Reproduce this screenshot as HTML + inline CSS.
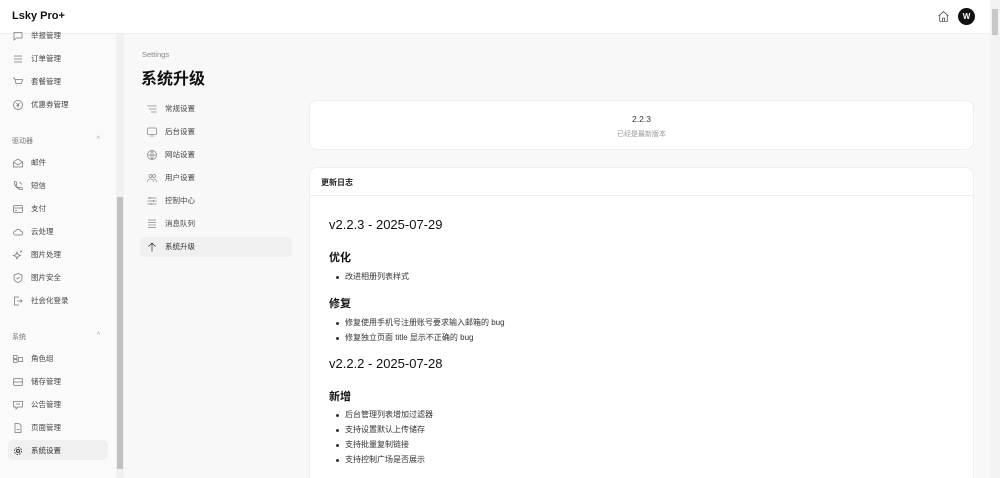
<!DOCTYPE html>
<html><head><meta charset="utf-8"><style>
*{margin:0;padding:0;box-sizing:border-box}
html,body{width:1000px;height:478px;overflow:hidden}
body{background:#f8f8f8;font-family:"Liberation Sans","Noto Sans CJK SC",sans-serif;color:#222;position:relative}
.hdr{position:absolute;left:0;top:0;width:990px;height:34px;background:#fff;border-bottom:1px solid #eee}
.logo{position:absolute;left:12px;top:10px;font-size:11px;font-weight:bold;color:#111}
.avatar{position:absolute;left:958px;top:8px;width:17px;height:17px;border-radius:50%;background:#111;color:#fff;font-size:8px;font-weight:bold;text-align:center;line-height:17px}
.home{position:absolute;left:937px;top:10px}
.pscroll{position:absolute;left:990px;top:0;width:10px;height:478px;background:#f3f3f3}
.pscroll i{position:absolute;left:2px;top:9px;width:6px;height:26px;background:#c8c8c8}
.side{position:absolute;left:0;top:34px;width:116px;height:444px;background:#fafafa}
.sbar{position:absolute;left:116px;top:34px;width:8px;height:444px;background:#f1f1f1}
.sbar i{position:absolute;left:1px;top:163px;width:6px;height:272px;background:#c1c1c1}
.si{position:absolute;left:12px;font-size:7.5px;color:#444;height:20px;line-height:20px;width:96px}
.si svg{position:absolute;left:0;top:4px}
.si span{position:absolute;left:19px}
.sh{position:absolute;left:12px;font-size:7px;color:#777;width:92px}
.sh b{position:absolute;right:4px;font-weight:normal;color:#999}
.sub{position:absolute;left:140px;width:152px;height:20px;font-size:7.5px;color:#444;line-height:20px;border-radius:4px}
.sub svg{position:absolute;left:6px;top:4px}
.sub span{position:absolute;left:25px}
.card{position:absolute;left:309px;width:665px;background:#fff;border:1px solid #eee;border-radius:8px}
.m{position:absolute;left:329px;color:#111}
li{position:absolute;left:345px;font-size:8px;color:#333;list-style:none}
li:before{content:"";position:absolute;left:-9px;top:5px;width:3px;height:3px;border-radius:50%;background:#333}
</style></head><body>
<div class="hdr"><div class="logo">Lsky Pro+</div>
<svg class="home" width="13" height="13" viewBox="0 0 24 24" fill="none" stroke="#555" stroke-width="1.6"><path d="M3 11l9-8 9 8M5 9v12h14V9M10 21v-6h4v6"/></svg>
<div class="avatar">W</div></div>
<div class="pscroll"><i></i></div>
<div class="side"></div>
<div class="sbar"><i></i></div>
<div style="position:absolute;left:8px;top:440px;width:100px;height:20px;background:#f0f0f0;border-radius:5px"></div>
<div class="si" style="top:26px"><svg width="12" height="12" viewBox="0 0 24 24" fill="none" stroke="#777" stroke-width="1.5"><path d="M4 5h16v11H9l-5 4z"/></svg><span>举报管理</span></div>
<div class="si" style="top:49px"><svg width="12" height="12" viewBox="0 0 24 24" fill="none" stroke="#777" stroke-width="1.5"><path d="M4 6h16M4 12h16M4 18h16"/></svg><span>订单管理</span></div>
<div class="si" style="top:72px"><svg width="12" height="12" viewBox="0 0 24 24" fill="none" stroke="#777" stroke-width="1.5"><path d="M2 4h3l3 11h11l2-8H6M9 20h1M17 20h1"/></svg><span>套餐管理</span></div>
<div class="si" style="top:95px"><svg width="12" height="12" viewBox="0 0 24 24" fill="none" stroke="#777" stroke-width="1.5"><circle cx="12" cy="12" r="9"/><path d="M9 8l3 4 3-4M12 12v5M9 13h6"/></svg><span>优惠券管理</span></div>
<div class="sh" style="top:136px">驱动器<b>^</b></div>
<div class="si" style="top:153px"><svg width="12" height="12" viewBox="0 0 24 24" fill="none" stroke="#777" stroke-width="1.5"><path d="M3 10l9-6 9 6v10H3zM3 10l9 6 9-6"/></svg><span>邮件</span></div>
<div class="si" style="top:176px"><svg width="12" height="12" viewBox="0 0 24 24" fill="none" stroke="#777" stroke-width="1.5"><path d="M5 3l4 1 1 4-2 2a12 12 0 006 6l2-2 4 1 1 4c-9 1-17-7-16-16zM15 4l5 5"/></svg><span>短信</span></div>
<div class="si" style="top:199px"><svg width="12" height="12" viewBox="0 0 24 24" fill="none" stroke="#777" stroke-width="1.5"><rect x="3" y="5" width="18" height="14" rx="2"/><path d="M3 10h18M6 15h4"/></svg><span>支付</span></div>
<div class="si" style="top:222px"><svg width="12" height="12" viewBox="0 0 24 24" fill="none" stroke="#777" stroke-width="1.5"><path d="M7 18a4 4 0 010-8 6 6 0 0111 1 3.5 3.5 0 010 7z"/></svg><span>云处理</span></div>
<div class="si" style="top:245px"><svg width="12" height="12" viewBox="0 0 24 24" fill="none" stroke="#777" stroke-width="1.5"><path d="M10 6l2 5 5 2-5 2-2 5-2-5-5-2 5-2zM18 3v4M16 5h4"/></svg><span>图片处理</span></div>
<div class="si" style="top:268px"><svg width="12" height="12" viewBox="0 0 24 24" fill="none" stroke="#777" stroke-width="1.5"><path d="M12 3l8 3v6c0 5-4 8-8 9-4-1-8-4-8-9V6zM9 12l2 2 4-4"/></svg><span>图片安全</span></div>
<div class="si" style="top:291px"><svg width="12" height="12" viewBox="0 0 24 24" fill="none" stroke="#777" stroke-width="1.5"><path d="M14 4H5v16h9M10 12h10M17 9l3 3-3 3"/></svg><span>社会化登录</span></div>
<div class="sh" style="top:332px">系统<b>^</b></div>
<div class="si" style="top:349px"><svg width="12" height="12" viewBox="0 0 24 24" fill="none" stroke="#777" stroke-width="1.5"><rect x="3" y="5" width="7" height="6"/><rect x="3" y="13" width="7" height="6"/><rect x="13" y="9" width="8" height="8"/></svg><span>角色组</span></div>
<div class="si" style="top:372px"><svg width="12" height="12" viewBox="0 0 24 24" fill="none" stroke="#777" stroke-width="1.5"><rect x="3" y="5" width="18" height="14" rx="3"/><path d="M3 12h18"/></svg><span>储存管理</span></div>
<div class="si" style="top:395px"><svg width="12" height="12" viewBox="0 0 24 24" fill="none" stroke="#777" stroke-width="1.5"><path d="M3 5h18v11h-9l-4 4v-4H3zM8 10h8"/></svg><span>公告管理</span></div>
<div class="si" style="top:418px"><svg width="12" height="12" viewBox="0 0 24 24" fill="none" stroke="#777" stroke-width="1.5"><path d="M6 3h8l4 4v14H6zM9 15h6"/></svg><span>页面管理</span></div>
<div class="si" style="top:441px;color:#333"><svg width="12" height="12" viewBox="0 0 24 24" fill="none" stroke="#333" stroke-width="2"><circle cx="12" cy="12" r="3"/><circle cx="12" cy="12" r="7" stroke-dasharray="3 2.5"/></svg><span>系统设置</span></div>

<div style="position:absolute;left:142px;top:50px;font-size:7.5px;color:#888">Settings</div>
<div style="position:absolute;left:141px;top:65px;font-size:16px;font-weight:bold;color:#111">系统升级</div>
<div class="sub" style="top:99px"><svg width="12" height="12" viewBox="0 0 24 24" fill="none" stroke="#888" stroke-width="1.5"><path d="M3 6h18M6 12h15M10 18h11"/></svg><span>常规设置</span></div>
<div class="sub" style="top:122px"><svg width="12" height="12" viewBox="0 0 24 24" fill="none" stroke="#888" stroke-width="1.5"><rect x="3" y="4" width="18" height="13" rx="2"/><path d="M8 20h8"/></svg><span>后台设置</span></div>
<div class="sub" style="top:145px"><svg width="12" height="12" viewBox="0 0 24 24" fill="none" stroke="#888" stroke-width="1.5"><circle cx="12" cy="12" r="9"/><path d="M3 12h18M12 3c3 3 3 15 0 18M12 3c-3 3-3 15 0 18"/></svg><span>网站设置</span></div>
<div class="sub" style="top:168px"><svg width="12" height="12" viewBox="0 0 24 24" fill="none" stroke="#888" stroke-width="1.5"><circle cx="9" cy="8" r="3"/><circle cx="16" cy="8" r="3"/><path d="M3 20c0-4 3-6 6-6s6 2 6 6M15 14c3 0 6 2 6 6"/></svg><span>用户设置</span></div>
<div class="sub" style="top:191px"><svg width="12" height="12" viewBox="0 0 24 24" fill="none" stroke="#888" stroke-width="1.5"><path d="M3 6h18M3 12h18M3 18h18M8 4v4M15 10v4M10 16v4"/></svg><span>控制中心</span></div>
<div class="sub" style="top:214px"><svg width="12" height="12" viewBox="0 0 24 24" fill="none" stroke="#888" stroke-width="1.5"><path d="M4 4h16M4 9h16M4 14h16M4 19h16"/></svg><span>消息队列</span></div>
<div class="sub" style="top:237px;background:#f0f0f0;color:#333"><svg width="12" height="12" viewBox="0 0 24 24" fill="none" stroke="#333" stroke-width="1.5"><path d="M12 21V4M5 11l7-7 7 7"/></svg><span>系统升级</span></div>

<div class="card" style="top:100px;height:50px">
<div style="position:absolute;left:0;width:100%;top:13px;text-align:center;font-size:8.5px;color:#333">2.2.3</div>
<div style="position:absolute;left:0;width:100%;top:28px;text-align:center;font-size:7px;color:#999">已经是最新版本</div></div>
<div class="card" style="top:167px;height:320px"><div style="height:28px;border-bottom:1px solid #eee;padding:9px 11px;font-size:8px;font-weight:bold;color:#222">更新日志</div></div>
<div class="m" style="top:217px;font-size:13px">v2.2.3 - 2025-07-29</div>
<div class="m" style="top:249px;font-size:11px;font-weight:bold">优化</div>
<ul><li style="top:271px">改进相册列表样式</li></ul>
<div class="m" style="top:295px;font-size:11px;font-weight:bold">修复</div>
<ul><li style="top:317px">修复使用手机号注册账号要求输入邮箱的 bug</li><li style="top:332px">修复独立页面 title 显示不正确的 bug</li></ul>
<div class="m" style="top:356px;font-size:13px">v2.2.2 - 2025-07-28</div>
<div class="m" style="top:388px;font-size:11px;font-weight:bold">新增</div>
<ul><li style="top:409px">后台管理列表增加过滤器</li><li style="top:424px">支持设置默认上传储存</li><li style="top:439px">支持批量复制链接</li><li style="top:454px">支持控制广场是否展示</li></ul>
</body></html>
